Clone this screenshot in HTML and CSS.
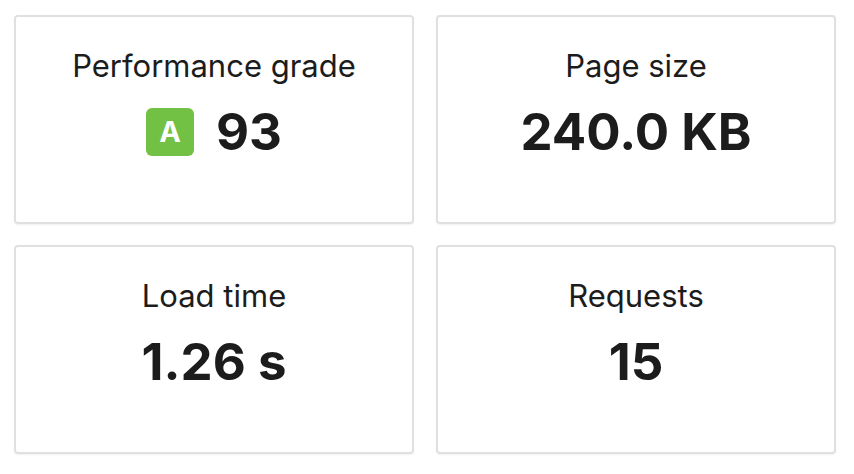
FILE: index.html
```html
<!DOCTYPE html>
<html lang="en">
<head>
    <meta charset="UTF-8">
    <meta name="viewport" content="width=device-width, initial-scale=1.0">
    <title>Page Summary</title>
    <link rel="stylesheet" href="styles.css">
</head>
<body>

    <div class="summary">
        <div class="card">
            <div class="label">Performance grade</div>
            <div class="value">
                <span class="grade">A</span>
                <span>93</span>
            </div>
        </div>

        <div class="card">
            <div class="label">Page size</div>
            <div class="value">240.0 KB</div>
        </div>

        <div class="card">
            <div class="label">Load time</div>
            <div class="value">1.26 s</div>
        </div>

        <div class="card">
            <div class="label">Requests</div>
            <div class="value">15</div>
        </div>
    </div>

</body>
</html>
```

FILE: styles.css
```css
body {
    font-family: Inter, "Noto Sans", sans-serif;
    background-color: #ffffff;
    color: #1c1c1c;
    margin: 0;
    padding: 15px 14px;
}

.summary {
    display: grid;
    grid-template-columns: 400px 400px;
    grid-auto-rows: 209px;
    gap: 21px 22px;
}

.card {
    box-sizing: border-box;
    border: 2px solid #e0e0e0;
    border-radius: 4px;
    box-shadow: 0 1px 2px rgba(0, 0, 0, 0.06);
    padding-top: 31px;
    text-align: center;
}

.label {
    font-size: 31px;
    line-height: 36px;
}

.value {
    display: flex;
    justify-content: center;
    align-items: center;
    gap: 22px;
    margin-top: 18px;
    font-size: 51px;
    font-weight: 700;
    line-height: 60px;
}

.grade {
    display: flex;
    align-items: center;
    justify-content: center;
    width: 48px;
    height: 48px;
    border-radius: 6px;
    background-color: #72c144;
    color: #ffffff;
    font-size: 29px;
    font-weight: 700;
}
```
